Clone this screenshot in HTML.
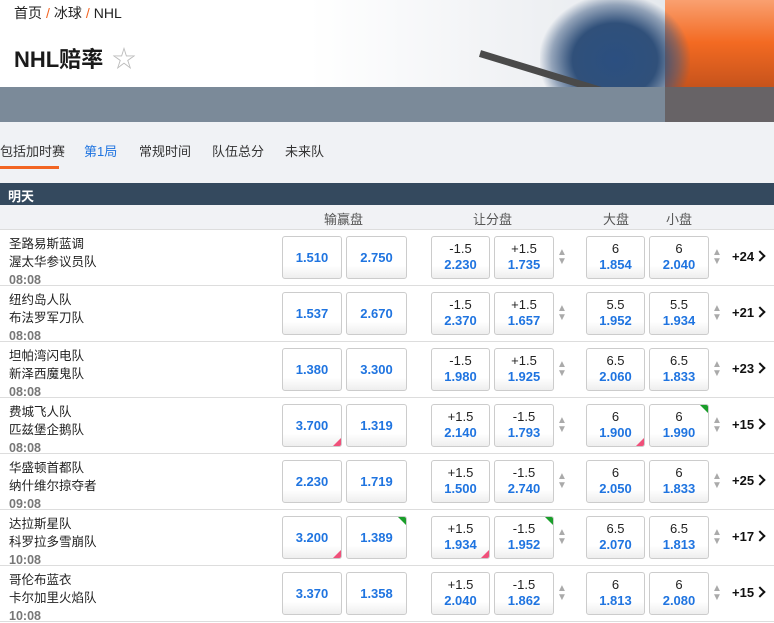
<!DOCTYPE html>
<html><head><meta charset="utf-8"><style>
*{margin:0;padding:0;box-sizing:border-box}
body{width:774px;height:619px;overflow:hidden;background:#fff;font-family:"Liberation Sans","Noto Sans CJK SC",sans-serif;position:relative}
.banner{position:absolute;left:0;top:0;width:774px;height:122px;background:linear-gradient(90deg,#fff 0,#fff 40%,#eef0f3 70%,#dfe3e8 100%);overflow:hidden}
.band{position:absolute;left:0;top:87px;width:774px;height:35px;background:#7b8a99}
.or{position:absolute;left:665px;top:0;width:109px;height:122px;background:linear-gradient(180deg,#f9a070 0,#f36a22 35%,#c8541c 70%,#8a4a30 100%)}
.pl{position:absolute;left:540px;top:-5px;width:150px;height:130px;background:radial-gradient(ellipse at 50% 50%,#2b4f80 0,#30507a 40%,rgba(60,90,130,.5) 60%,rgba(200,210,225,0) 72%)}
.stick{position:absolute;left:480px;top:50px;width:190px;height:7px;background:#4a4a4a;transform:rotate(17deg);transform-origin:left}
.bc{position:absolute;left:14px;top:3px;font-size:14px;color:#222}
.bc span{color:#f26522;margin:0 4px}
h1{position:absolute;left:14px;top:42px;font-size:22px;font-weight:bold;color:#1a1a1a}
.star{position:absolute;left:112px;top:39px;font-size:24px;color:#bbb}
.tabs{position:absolute;left:0;top:122px;width:774px;height:61px;background:#f0f2f5}
.tab{position:absolute;top:19px;font-size:13px;color:#333}
.ul{position:absolute;left:0;top:44px;width:59px;height:3px;background:#f26522}
.day{position:absolute;left:0;top:183px;width:774px;height:22px;background:#34495e;color:#fff;font-size:13px;font-weight:bold;padding:3px 8px}
.ch{position:absolute;left:0;top:205px;width:774px;height:25px;background:#f1f2f5;border-bottom:1px solid #ddd;font-size:13px;color:#555}
.ch div{position:absolute;top:4px}
.row{position:absolute;left:0;width:774px;height:56px;border-bottom:1px solid #ddd;background:#fff}
.t{position:absolute;left:9px;font-size:12.5px;color:#222}
.tm{position:absolute;left:9px;top:43px;font-size:12.5px;font-weight:bold;color:#777}
.b{position:absolute;top:6px;height:43px;border:1px solid #ccc;border-radius:3px;background:linear-gradient(#fff 70%,#eee);text-align:center;font-size:13px;color:#1f74e0;overflow:hidden;font-weight:bold}
.b.s{line-height:42px}
.b .h{display:block;color:#222;margin-top:4px;line-height:15px;font-weight:normal}
.b .o{display:block;line-height:17px}
.r:after{content:"";position:absolute;right:0;bottom:0;border-left:8px solid transparent;border-bottom:8px solid #f0507a}
.g:before{content:"";position:absolute;right:0;top:0;border-left:8px solid transparent;border-top:8px solid #1a9e2a}
.ar{position:absolute;top:18px;width:10px;font-size:10px;line-height:9px;color:#aaa}
.more{position:absolute;left:732px;top:19px;font-size:13px;font-weight:bold;color:#111}
.chev{position:absolute;left:756px;top:22px;width:8px;height:8px;border-right:2px solid #111;border-top:2px solid #111;transform:rotate(45deg)}
</style></head><body>
<div class="banner"><div class="or"></div><div class="pl"></div><div class="stick"></div><div class="band"></div><div style="position:absolute;left:665px;top:87px;width:109px;height:35px;background:rgba(80,50,40,.45)"></div></div>
<div class="bc">首页<span>/</span>冰球<span>/</span>NHL</div>
<h1>NHL赔率</h1><div class="star">☆</div>
<div class="tabs">
<div class="tab" style="left:0">包括加时赛</div><div class="ul"></div>
<div class="tab" style="left:84px;color:#1f74e0">第1局</div>
<div class="tab" style="left:139px">常规时间</div>
<div class="tab" style="left:212px">队伍总分</div>
<div class="tab" style="left:285px">未来队</div>
</div>
<div class="day">明天</div>
<div class="ch"><div style="left:324px">输赢盘</div><div style="left:473px">让分盘</div><div style="left:603px">大盘</div><div style="left:666px">小盘</div></div>

<div class="row" style="top:230px"><div class="t" style="top:3px">圣路易斯蓝调</div><div class="t" style="top:21px">渥太华参议员队</div><div class="tm">08:08</div>
<div class="b s" style="left:282px;width:60px">1.510</div><div class="b s" style="left:346px;width:61px">2.750</div>
<div class="b" style="left:431px;width:59px"><span class="h">-1.5</span><span class="o">2.230</span></div><div class="b" style="left:494px;width:60px"><span class="h">+1.5</span><span class="o">1.735</span></div><div class="ar" style="left:557px">▲<br>▼</div>
<div class="b" style="left:586px;width:59px"><span class="h">6</span><span class="o">1.854</span></div><div class="b" style="left:649px;width:60px"><span class="h">6</span><span class="o">2.040</span></div><div class="ar" style="left:712px">▲<br>▼</div>
<div class="more">+24</div><div class="chev"></div></div>

<div class="row" style="top:286px"><div class="t" style="top:3px">纽约岛人队</div><div class="t" style="top:21px">布法罗军刀队</div><div class="tm">08:08</div>
<div class="b s" style="left:282px;width:60px">1.537</div><div class="b s" style="left:346px;width:61px">2.670</div>
<div class="b" style="left:431px;width:59px"><span class="h">-1.5</span><span class="o">2.370</span></div><div class="b" style="left:494px;width:60px"><span class="h">+1.5</span><span class="o">1.657</span></div><div class="ar" style="left:557px">▲<br>▼</div>
<div class="b" style="left:586px;width:59px"><span class="h">5.5</span><span class="o">1.952</span></div><div class="b" style="left:649px;width:60px"><span class="h">5.5</span><span class="o">1.934</span></div><div class="ar" style="left:712px">▲<br>▼</div>
<div class="more">+21</div><div class="chev"></div></div>

<div class="row" style="top:342px"><div class="t" style="top:3px">坦帕湾闪电队</div><div class="t" style="top:21px">新泽西魔鬼队</div><div class="tm">08:08</div>
<div class="b s" style="left:282px;width:60px">1.380</div><div class="b s" style="left:346px;width:61px">3.300</div>
<div class="b" style="left:431px;width:59px"><span class="h">-1.5</span><span class="o">1.980</span></div><div class="b" style="left:494px;width:60px"><span class="h">+1.5</span><span class="o">1.925</span></div><div class="ar" style="left:557px">▲<br>▼</div>
<div class="b" style="left:586px;width:59px"><span class="h">6.5</span><span class="o">2.060</span></div><div class="b" style="left:649px;width:60px"><span class="h">6.5</span><span class="o">1.833</span></div><div class="ar" style="left:712px">▲<br>▼</div>
<div class="more">+23</div><div class="chev"></div></div>

<div class="row" style="top:398px"><div class="t" style="top:3px">费城飞人队</div><div class="t" style="top:21px">匹兹堡企鹅队</div><div class="tm">08:08</div>
<div class="b s r" style="left:282px;width:60px">3.700</div><div class="b s" style="left:346px;width:61px">1.319</div>
<div class="b" style="left:431px;width:59px"><span class="h">+1.5</span><span class="o">2.140</span></div><div class="b" style="left:494px;width:60px"><span class="h">-1.5</span><span class="o">1.793</span></div><div class="ar" style="left:557px">▲<br>▼</div>
<div class="b r" style="left:586px;width:59px"><span class="h">6</span><span class="o">1.900</span></div><div class="b g" style="left:649px;width:60px"><span class="h">6</span><span class="o">1.990</span></div><div class="ar" style="left:712px">▲<br>▼</div>
<div class="more">+15</div><div class="chev"></div></div>

<div class="row" style="top:454px"><div class="t" style="top:3px">华盛顿首都队</div><div class="t" style="top:21px">纳什维尔掠夺者</div><div class="tm">09:08</div>
<div class="b s" style="left:282px;width:60px">2.230</div><div class="b s" style="left:346px;width:61px">1.719</div>
<div class="b" style="left:431px;width:59px"><span class="h">+1.5</span><span class="o">1.500</span></div><div class="b" style="left:494px;width:60px"><span class="h">-1.5</span><span class="o">2.740</span></div><div class="ar" style="left:557px">▲<br>▼</div>
<div class="b" style="left:586px;width:59px"><span class="h">6</span><span class="o">2.050</span></div><div class="b" style="left:649px;width:60px"><span class="h">6</span><span class="o">1.833</span></div><div class="ar" style="left:712px">▲<br>▼</div>
<div class="more">+25</div><div class="chev"></div></div>

<div class="row" style="top:510px"><div class="t" style="top:3px">达拉斯星队</div><div class="t" style="top:21px">科罗拉多雪崩队</div><div class="tm">10:08</div>
<div class="b s r" style="left:282px;width:60px">3.200</div><div class="b s g" style="left:346px;width:61px">1.389</div>
<div class="b r" style="left:431px;width:59px"><span class="h">+1.5</span><span class="o">1.934</span></div><div class="b g" style="left:494px;width:60px"><span class="h">-1.5</span><span class="o">1.952</span></div><div class="ar" style="left:557px">▲<br>▼</div>
<div class="b" style="left:586px;width:59px"><span class="h">6.5</span><span class="o">2.070</span></div><div class="b" style="left:649px;width:60px"><span class="h">6.5</span><span class="o">1.813</span></div><div class="ar" style="left:712px">▲<br>▼</div>
<div class="more">+17</div><div class="chev"></div></div>

<div class="row" style="top:566px"><div class="t" style="top:3px">哥伦布蓝衣</div><div class="t" style="top:21px">卡尔加里火焰队</div><div class="tm">10:08</div>
<div class="b s" style="left:282px;width:60px">3.370</div><div class="b s" style="left:346px;width:61px">1.358</div>
<div class="b" style="left:431px;width:59px"><span class="h">+1.5</span><span class="o">2.040</span></div><div class="b" style="left:494px;width:60px"><span class="h">-1.5</span><span class="o">1.862</span></div><div class="ar" style="left:557px">▲<br>▼</div>
<div class="b" style="left:586px;width:59px"><span class="h">6</span><span class="o">1.813</span></div><div class="b" style="left:649px;width:60px"><span class="h">6</span><span class="o">2.080</span></div><div class="ar" style="left:712px">▲<br>▼</div>
<div class="more">+15</div><div class="chev"></div></div>
</body></html>
